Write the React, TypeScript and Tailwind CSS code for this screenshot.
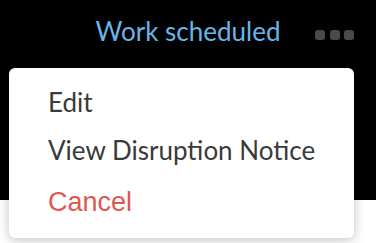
import { useState } from 'react';

const items = [
  { label: 'Edit', danger: false },
  { label: 'View Disruption Notice', danger: false },
  { label: 'Cancel', danger: true },
];

export default function App() {
  const [open] = useState(true);

  return (
    <div className="relative w-[376px] h-[243px] overflow-hidden bg-white font-['Lato',sans-serif]">
      {/* Header */}
      <div className="relative h-[200px] bg-black pt-[18px]">
        <div className="flex justify-center">
          <span className="text-[26px] leading-[26px] text-[#66b6ea]">Work scheduled</span>
        </div>
        <div className="absolute right-[22px] top-[30px] flex gap-[4.5px]">
          <span className="w-[10px] h-[10px] rounded-[3px] bg-[#4a4a4a]" />
          <span className="w-[10px] h-[10px] rounded-[3px] bg-[#4a4a4a]" />
          <span className="w-[10px] h-[10px] rounded-[3px] bg-[#4a4a4a]" />
        </div>
      </div>

      {/* Menu */}
      {open && (
        <div className="absolute left-[9px] top-[68px] w-[345px] h-[170px] rounded-[6px] bg-white shadow-[0_2px_12px_rgba(0,0,0,0.25)] pl-[39px] pt-[10px]">
          {items.map((item) => (
            <button
              key={item.label}
              className={`block h-[48px] text-left leading-[48px] ${
                item.danger
                  ? "text-[27px] pt-[4px] text-[#e05752] font-['Liberation_Sans',Arial,sans-serif]"
                  : 'text-[26px] text-[#3a3a3a]'
              }`}
            >
              {item.label}
            </button>
          ))}
        </div>
      )}
    </div>
  );
}
